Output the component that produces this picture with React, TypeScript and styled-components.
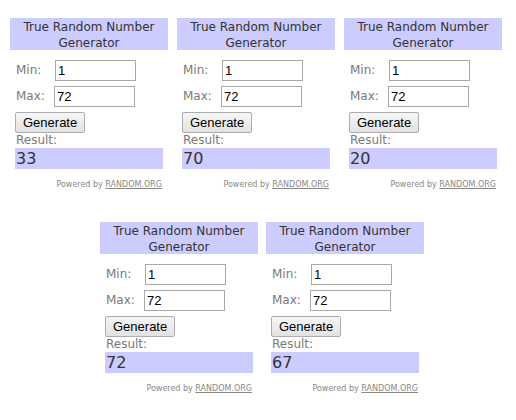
import React from "react";
import styled, { createGlobalStyle } from "styled-components";

const Global = createGlobalStyle`
  html, body { margin: 0; padding: 0; background: #ffffff; }
  body { font-family: "DejaVu Sans", Verdana, sans-serif; }
`;

const Page = styled.div`
  display: flex;
  flex-direction: column;
  gap: 31px;
  padding-top: 18px;
  width: 516px;
  height: 420px;
  box-sizing: border-box;
`;

const Row = styled.div<{ $indent: number; $gap: number }>`
  display: flex;
  padding-left: ${(p) => p.$indent}px;
  gap: ${(p) => p.$gap}px;
`;

const Widget = styled.div`
  width: 158px;
  display: flex;
  flex-direction: column;
`;

const Header = styled.div`
  height: 32px;
  box-sizing: border-box;
  padding-top: 1px;
  background: #ccccff;
  color: #333333;
  font-size: 12px;
  line-height: 16px;
  text-align: center;
`;

const Body = styled.div`
  display: flex;
  flex-direction: column;
  padding: 10px 5px 0 5px;
`;

const Field = styled.div<{ $labelWidth: number }>`
  display: flex;
  align-items: center;
  height: 21px;
  margin-bottom: 5px;

  & > span {
    width: ${(p) => p.$labelWidth}px;
    padding-left: 1px;
    box-sizing: border-box;
  }
`;

const Label = styled.span`
  font-size: 12px;
  color: #7a7a7a;
  line-height: 15px;
`;

const NumInput = styled.input`
  width: 81px;
  height: 21px;
  box-sizing: border-box;
  border: 1px solid #a9a9a9;
  padding: 0 2px;
  margin: 0;
  font-family: "Liberation Sans", Arial, sans-serif;
  font-size: 13px;
  color: #000000;
  background: #ffffff;
  outline: none;
`;

const Button = styled.button`
  align-self: flex-start;
  height: 21px;
  box-sizing: border-box;
  padding: 0 7px;
  margin: 0;
  border: 1px solid #adadad;
  border-radius: 2px;
  background: linear-gradient(#f6f6f6, #e2e2e2);
  font-family: "Liberation Sans", Arial, sans-serif;
  font-size: 13px;
  color: #000000;
  line-height: 19px;
`;

const ResultLabel = styled(Label)`
  display: block;
  height: 15px;
  padding-left: 1px;
`;

const ResultBox = styled.div`
  height: 21px;
  background: #ccccff;
  color: #333333;
  font-size: 16px;
  line-height: 21px;
  padding-left: 1px;
`;

const Powered = styled.div`
  margin-top: 10px;
  height: 12px;
  line-height: 12px;
  font-size: 8px;
  color: #888888;
  text-align: right;
  padding-right: 1px;

  & u {
    text-decoration: underline;
  }
`;

type GenProps = { result: number };

function Generator({ result }: GenProps) {
  return (
    <Widget>
      <Header>
        True Random Number
        <br />
        Generator
      </Header>
      <Body>
        <Field $labelWidth={40}>
          <Label>Min:</Label>
          <NumInput readOnly value="1" />
        </Field>
        <Field $labelWidth={39}>
          <Label>Max:</Label>
          <NumInput readOnly value="72" />
        </Field>
        <Button type="button">Generate</Button>
        <ResultLabel>Result:</ResultLabel>
        <ResultBox>{result}</ResultBox>
        <Powered>
          Powered by <u>RANDOM.ORG</u>
        </Powered>
      </Body>
    </Widget>
  );
}

export default function App() {
  return (
    <>
      <Global />
      <Page>
        <Row $indent={10} $gap={9}>
          <Generator result={33} />
          <Generator result={70} />
          <Generator result={20} />
        </Row>
        <Row $indent={100} $gap={8}>
          <Generator result={72} />
          <Generator result={67} />
        </Row>
      </Page>
    </>
  );
}
